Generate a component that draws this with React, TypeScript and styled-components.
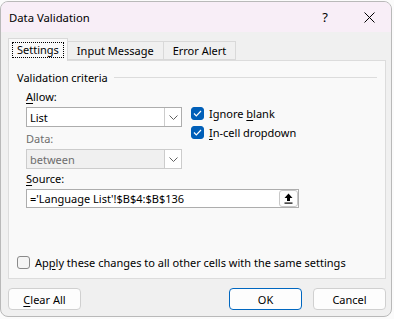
import styled, { createGlobalStyle } from "styled-components";

const GlobalStyle = createGlobalStyle`
  html, body {
    margin: 0;
    padding: 0;
    background: #ffffff;
  }
  body {
    font-family: "Noto Sans", "Open Sans", sans-serif;
    font-size: 11px;
    color: #000;
  }
`;

const Screen = styled.div`
  width: 394px;
  height: 319px;
  overflow: hidden;
  background: #fbfbfb;
  padding: 1px 2px 2px 0;
  box-sizing: border-box;
`;

const Window = styled.div`
  width: 392px;
  height: 316px;
  box-sizing: border-box;
  border: 1px solid #b9b9b9;
  border-radius: 8px;
  background: #f0f0f0;
  display: flex;
  flex-direction: column;
  overflow: hidden;
`;

const TitleBar = styled.div`
  height: 30px;
  flex-shrink: 0;
  background: #f8eef7;
  display: flex;
  align-items: center;
  padding-left: 8px;
`;

const Title = styled.div`
  flex: 1;
  font-size: 11.3px;
`;

const TitleButton = styled.div`
  width: 44px;
  height: 30px;
  display: flex;
  align-items: center;
  justify-content: center;
  font-size: 13px;
`;

const Body = styled.div`
  flex: 1;
  display: flex;
  flex-direction: column;
  padding: 6px 6px 0 7px;
`;

const TabRow = styled.div`
  display: flex;
  align-items: flex-end;
  height: 22px;
  position: relative;
  z-index: 1;
`;

const Tab = styled.div<{ $active?: boolean }>`
  height: ${(p) => (p.$active ? "23px" : "19px")};
  margin-bottom: ${(p) => (p.$active ? "-1px" : "0")};
  box-sizing: border-box;
  border: 1px solid #d9d9d9;
  border-bottom: ${(p) => (p.$active ? "none" : "1px solid #d9d9d9")};
  background: ${(p) => (p.$active ? "#f9f9f9" : "#f0f0f0")};
  margin-left: ${(p) => (p.$active ? "0" : "-1px")};
  padding: ${(p) => (p.$active ? "4px 4px 0" : "0 9px")};
  display: flex;
  align-items: ${(p) => (p.$active ? "flex-start" : "center")};
`;

const FocusLabel = styled.span`
  outline: 1px dotted #000;
  padding: 0 4px;
  line-height: 14px;
`;

const Panel = styled.div`
  height: 219px;
  box-sizing: border-box;
  border: 1px solid #dcdcdc;
  background: #f9f9f9;
  width: 378px;
  display: flex;
  flex-direction: column;
  padding: 8px 8px 0 8px;
`;

const Legend = styled.div`
  display: flex;
  align-items: center;
  gap: 6px;
  height: 16px;
  &::after {
    content: "";
    flex: 1;
    height: 1px;
    background: #dcdcdc;
  }
`;

const Criteria = styled.div`
  display: flex;
  padding-left: 9px;
  gap: 9px;
`;

const LeftCol = styled.div`
  width: 156px;
  display: flex;
  flex-direction: column;
`;

const Label = styled.div<{ $disabled?: boolean; $top?: number }>`
  height: 16px;
  line-height: 16px;
  color: ${(p) => (p.$disabled ? "#6d6d6d" : "#000")};
  margin-top: ${(p) => p.$top ?? 4}px;
  margin-bottom: 2px;
`;

const Combo = styled.div<{ $disabled?: boolean }>`
  height: 20px;
  box-sizing: border-box;
  border: 1px solid ${(p) => (p.$disabled ? "#cccccc" : "#adadad")};
  background: ${(p) => (p.$disabled ? "#f0f0f0" : "#ffffff")};
  color: ${(p) => (p.$disabled ? "#6d6d6d" : "#000")};
  display: flex;
  align-items: center;
  padding-left: 3px;
`;

const ComboText = styled.div`
  flex: 1;
`;

const ComboButton = styled.div`
  width: 17px;
  height: 18px;
  box-sizing: border-box;
  border-left: 1px solid #cccccc;
  background: #ffffff;
  display: flex;
  align-items: center;
  justify-content: center;
`;

const RightCol = styled.div`
  display: flex;
  flex-direction: column;
  padding-top: 21px;
  gap: 5px;
`;

const CheckRow = styled.div`
  display: flex;
  align-items: center;
  gap: 5px;
  height: 14px;
`;

const Box = styled.div<{ $checked?: boolean }>`
  width: 13px;
  height: 13px;
  box-sizing: border-box;
  border-radius: 3px;
  background: ${(p) => (p.$checked ? "#005fb8" : "#f5f5f5")};
  border: 1px solid ${(p) => (p.$checked ? "#005fb8" : "#8a8a8a")};
  display: flex;
  align-items: center;
  justify-content: center;
`;

const SourceWrap = styled.div`
  padding-left: 9px;
  display: flex;
  flex-direction: column;
`;

const SourceInput = styled.div`
  width: 273px;
  height: 19px;
  box-sizing: border-box;
  border: 1px solid #adadad;
  background: #fff;
  display: flex;
  align-items: center;
  padding-left: 3px;
`;

const PickButton = styled.div`
  width: 19px;
  height: 17px;
  box-sizing: border-box;
  border: 1px solid #c8c8c8;
  border-radius: 3px;
  background: #fdfdfd;
  display: flex;
  align-items: center;
  justify-content: center;
`;

const Spacer = styled.div`
  flex: 1;
`;

const ApplyRow = styled(CheckRow)`
  margin-bottom: 9px;
`;

const Footer = styled.div`
  display: flex;
  align-items: center;
  gap: 11px;
  padding-top: 9px;
  width: 378px;
`;

const Button = styled.div<{ $primary?: boolean }>`
  width: 73px;
  height: 22px;
  box-sizing: border-box;
  border: 1px solid ${(p) => (p.$primary ? "#0067c0" : "#d0d0d0")};
  border-radius: 4px;
  background: #fdfdfd;
  display: flex;
  align-items: center;
  justify-content: center;
`;

const U = styled.span`
  text-decoration: underline;
  text-underline-offset: 2px;
`;

const Chevron = () => (
  <svg width="9" height="5" viewBox="0 0 9 5">
    <path d="M0.5 0.5 L4.5 4.5 L8.5 0.5" fill="none" stroke="#606060" strokeWidth="1" />
  </svg>
);

const Tick = () => (
  <svg width="9" height="7" viewBox="0 0 9 7">
    <path d="M1 3.5 L3.3 5.8 L8 1" fill="none" stroke="#ffffff" strokeWidth="1.2" />
  </svg>
);

const UpArrow = () => (
  <svg width="9" height="11" viewBox="0 0 9 11">
    <path d="M4.5 0.5 L8.5 5 L6 5 L6 8 L3 8 L3 5 L0.5 5 Z" fill="#000" />
    <rect x="0.5" y="9.5" width="8" height="1.2" fill="#000" />
  </svg>
);

const Close = () => (
  <svg width="11" height="11" viewBox="0 0 11 11">
    <path d="M0.5 0.5 L10.5 10.5 M10.5 0.5 L0.5 10.5" stroke="#000" strokeWidth="1" />
  </svg>
);

export default function App() {
  return (
    <>
      <GlobalStyle />
      <Screen>
        <Window>
          <TitleBar>
            <Title>Data Validation</Title>
            <TitleButton>?</TitleButton>
            <TitleButton>
              <Close />
            </TitleButton>
          </TitleBar>
          <Body>
            <TabRow>
              <Tab $active>
                <FocusLabel>Settings</FocusLabel>
              </Tab>
              <Tab>Input Message</Tab>
              <Tab>Error Alert</Tab>
            </TabRow>
            <Panel>
              <Legend>Validation criteria</Legend>
              <Criteria>
                <LeftCol>
                  <Label>
                    <U>A</U>llow:
                  </Label>
                  <Combo>
                    <ComboText>List</ComboText>
                    <ComboButton>
                      <Chevron />
                    </ComboButton>
                  </Combo>
                  <Label $disabled>Data:</Label>
                  <Combo $disabled>
                    <ComboText>between</ComboText>
                    <ComboButton>
                      <Chevron />
                    </ComboButton>
                  </Combo>
                </LeftCol>
                <RightCol>
                  <CheckRow>
                    <Box $checked>
                      <Tick />
                    </Box>
                    <span>
                      Ignore <U>b</U>lank
                    </span>
                  </CheckRow>
                  <CheckRow>
                    <Box $checked>
                      <Tick />
                    </Box>
                    <span>
                      <U>I</U>n-cell dropdown
                    </span>
                  </CheckRow>
                </RightCol>
              </Criteria>
              <SourceWrap>
                <Label $top={2}>
                  <U>S</U>ource:
                </Label>
                <SourceInput>
                  <ComboText>='Language List'!$B$4:$B$136</ComboText>
                  <PickButton>
                    <UpArrow />
                  </PickButton>
                </SourceInput>
              </SourceWrap>
              <Spacer />
              <ApplyRow>
                <Box />
                <span>
                  Ap<U>p</U>ly these changes to all other cells with the same settings
                </span>
              </ApplyRow>
            </Panel>
            <Footer>
              <Button>
                <span>
                  <U>C</U>lear All
                </span>
              </Button>
              <Spacer />
              <Button $primary>OK</Button>
              <Button>Cancel</Button>
            </Footer>
          </Body>
        </Window>
      </Screen>
    </>
  );
}
